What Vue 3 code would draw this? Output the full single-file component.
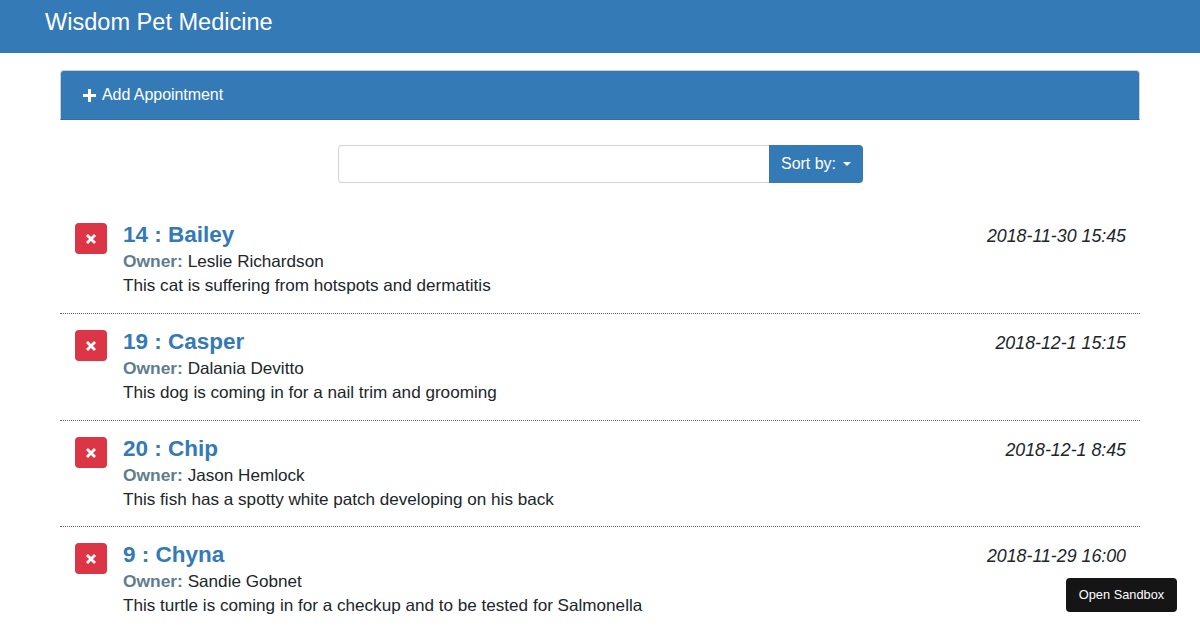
<script setup>
const items = [
  { id: 14, name: 'Bailey', date: '2018-11-30 15:45', owner: 'Leslie Richardson', notes: 'This cat is suffering from hotspots and dermatitis' },
  { id: 19, name: 'Casper', date: '2018-12-1 15:15', owner: 'Dalania Devitto', notes: 'This dog is coming in for a nail trim and grooming' },
  { id: 20, name: 'Chip', date: '2018-12-1 8:45', owner: 'Jason Hemlock', notes: 'This fish has a spotty white patch developing on his back' },
  { id: 9, name: 'Chyna', date: '2018-11-29 16:00', owner: 'Sandie Gobnet', notes: 'This turtle is coming in for a checkup and to be tested for Salmonella' },
]
</script>

<template>
  <div class="page">
    <header class="nav"><span class="brand">Wisdom Pet Medicine</span></header>
    <main class="container">
      <div class="card">
        <svg class="plus" width="15" height="15" viewBox="0 0 15 15"><path d="M6 1h3v5h5v3H9v5H6V9H1V6h5z" fill="#fff" /></svg>
        <span>Add Appointment</span>
      </div>
      <div class="search">
        <input class="input" type="text" />
        <button class="sort">Sort by:<i class="caret"></i></button>
      </div>
      <ul class="list">
        <li v-for="item in items" :key="item.id" class="row">
          <button class="del">
            <svg class="x" width="10" height="10" viewBox="0 0 10 10"><path d="M1 1l8 8M9 1l-8 8" stroke="#fff" stroke-width="2.8" /></svg>
          </button>
          <div class="info">
            <div class="top">
              <span class="title">{{ item.id }} : {{ item.name }}</span>
              <span class="date">{{ item.date }}</span>
            </div>
            <div class="line"><b class="owner">Owner:</b> {{ item.owner }}</div>
            <div class="line">{{ item.notes }}</div>
          </div>
        </li>
      </ul>
    </main>
    <div class="sandbox">Open Sandbox</div>
  </div>
</template>

<style>
html, body { margin: 0; overflow: hidden; background: #fff; }
</style>

<style scoped>
.page { width: 1200px; height: 630px; overflow: hidden; position: relative; font-family: "Liberation Sans", Arial, sans-serif; font-size: 16px; line-height: 24px; color: #212529; }
.nav { height: 53px; background: #337ab7; box-sizing: border-box; padding: 8px 45px 0; }
.brand { font-size: 23.55px; line-height: 29px; color: #fff; display: block; }
.container { width: 1080px; margin: 17px auto 0; }
.card { height: 50px; box-sizing: border-box; background: #337ab7; border: 1px solid #ccd2d8; border-bottom-color: #2e6da4; border-top-color: #c9ced3; border-radius: 4px 4px 0 0; color: #fff; display: flex; align-items: center; padding: 0 0 1px 21px; gap: 5px; letter-spacing: -0.05px; }
.plus { margin-top: 2px; }
.search { display: flex; width: 525px; height: 38px; margin: 25px 0 0 278px; }
.input { flex: 1; min-width: 0; box-sizing: border-box; border: 1px solid #ced4da; border-right: 0; border-radius: 4px 0 0 4px; background: #fff; outline: 0; padding: 0; }
.sort { width: 94px; padding: 0 0 0 12px; border: 0; border-radius: 0 4px 4px 0; background: #337ab7; color: #fff; font: inherit; display: flex; align-items: center; gap: 7px; letter-spacing: -0.02px; }
.caret { width: 0; height: 0; border-left: 4px solid transparent; border-right: 4px solid transparent; border-top: 4px solid #fff; }
.list { list-style: none; margin: 24.3px 0 0; padding: 0; }
.row { display: flex; gap: 16px; box-sizing: border-box; height: 106.67px; padding: 16px 14px 0 15px; border-bottom: 1px dotted #666; }
.del { width: 32px; height: 31px; flex: none; padding: 0; border: 0; border-radius: 4px; background: #dc3545; display: flex; align-items: center; justify-content: center; }
.x { margin-top: 1px; }
.info { flex: 1; min-width: 0; margin-top: -3px; }
.top { display: flex; justify-content: space-between; align-items: flex-start; height: 27px; }
.title { font-size: 22.5px; font-weight: 700; line-height: 29px; color: #337ab7; }
.date { font-style: italic; font-size: 17.8px; line-height: 26px; margin-top: 3px; color: #212529; }
.line { font-size: 17.12px; line-height: 24px; }
.line:nth-child(2) { margin-top: 2px; }
.owner { color: #607d8b; font-weight: 700; font-size: 17.4px; }
.sandbox { position: absolute; right: 23px; bottom: 18px; width: 111px; height: 34px; box-sizing: border-box; background: #151515; color: #fff; border-radius: 4px; font-size: 12.8px; line-height: 33px; text-align: center; }
</style>
